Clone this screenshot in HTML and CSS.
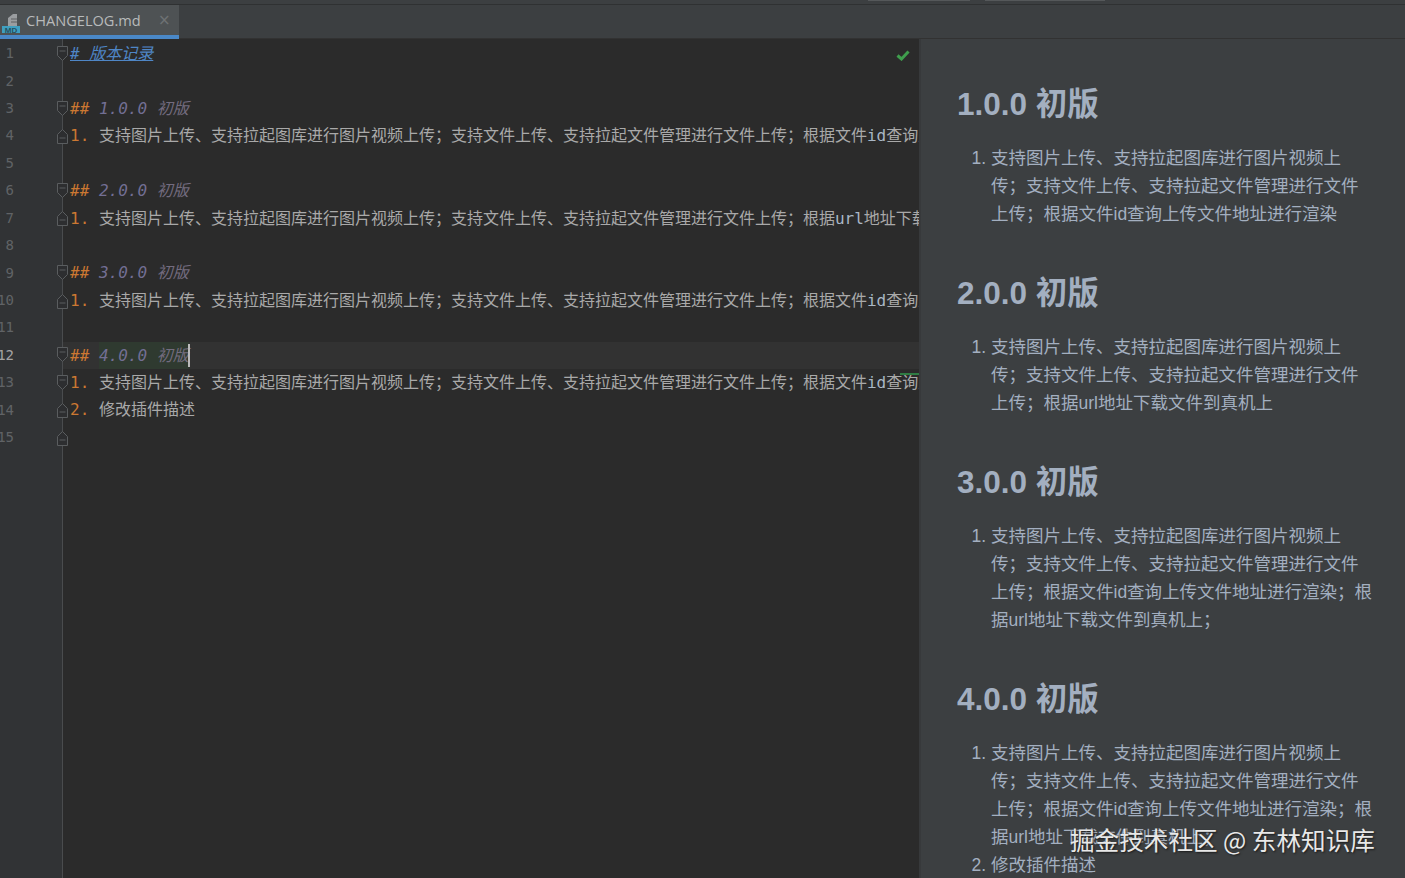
FILE: index.html
```html
<!DOCTYPE html>
<html lang="zh">
<head>
<meta charset="utf-8">
<title>CHANGELOG.md</title>
<link rel="stylesheet" href="styles.css">
</head>
<body>
<div class="app">
  <div class="topline"><span class="top-tick tick-a"></span><span class="top-tick tick-b"></span></div>
  <div class="tabbar">
    <div class="tab">
      <svg class="file-icon" width="18" height="20" viewBox="0 0 18 20"><path d="M6 5 L11 1 H15 V13 H6 Z" fill="#9a9da0"/><path d="M9 6 H15 M9 9 H15" stroke="#5c5f61" stroke-width="1"/><rect x="0" y="13" width="20" height="8" fill="#3f9fc0"/></svg>
      <span class="md-badge">MD</span>
      <span class="tab-name">CHANGELOG.md</span>
      <span class="tab-close">×</span>
    </div>
  </div>
  <div class="main">
    <div class="editor">
      <div class="gutter">
        <div class="gut-row"><span class="num">1</span><svg class="fold" width="11" height="16" viewBox="0 0 11 16"><path d="M.5.5h10v9l-5 5-5-5z M2.5 5h6" class="fold-path"/></svg></div>
        <div class="gut-row"><span class="num">2</span></div>
        <div class="gut-row"><span class="num">3</span><svg class="fold" width="11" height="16" viewBox="0 0 11 16"><path d="M.5.5h10v9l-5 5-5-5z M2.5 5h6" class="fold-path"/></svg></div>
        <div class="gut-row"><span class="num">4</span><svg class="fold" width="11" height="16" viewBox="0 0 11 16"><path d="M.5 15.5h10v-9l-5-5-5 5z M2.5 10h6" class="fold-path"/></svg></div>
        <div class="gut-row"><span class="num">5</span></div>
        <div class="gut-row"><span class="num">6</span><svg class="fold" width="11" height="16" viewBox="0 0 11 16"><path d="M.5.5h10v9l-5 5-5-5z M2.5 5h6" class="fold-path"/></svg></div>
        <div class="gut-row"><span class="num">7</span><svg class="fold" width="11" height="16" viewBox="0 0 11 16"><path d="M.5 15.5h10v-9l-5-5-5 5z M2.5 10h6" class="fold-path"/></svg></div>
        <div class="gut-row"><span class="num">8</span></div>
        <div class="gut-row"><span class="num">9</span><svg class="fold" width="11" height="16" viewBox="0 0 11 16"><path d="M.5.5h10v9l-5 5-5-5z M2.5 5h6" class="fold-path"/></svg></div>
        <div class="gut-row"><span class="num">10</span><svg class="fold" width="11" height="16" viewBox="0 0 11 16"><path d="M.5 15.5h10v-9l-5-5-5 5z M2.5 10h6" class="fold-path"/></svg></div>
        <div class="gut-row"><span class="num">11</span></div>
        <div class="gut-row"><span class="num current">12</span><svg class="fold" width="11" height="16" viewBox="0 0 11 16"><path d="M.5.5h10v9l-5 5-5-5z M2.5 5h6" class="fold-path"/></svg></div>
        <div class="gut-row"><span class="num">13</span><svg class="fold" width="11" height="16" viewBox="0 0 11 16"><path d="M.5.5h10v9l-5 5-5-5z M2.5 5h6" class="fold-path"/></svg></div>
        <div class="gut-row"><span class="num">14</span><svg class="fold" width="11" height="16" viewBox="0 0 11 16"><path d="M.5 15.5h10v-9l-5-5-5 5z M2.5 10h6" class="fold-path"/></svg></div>
        <div class="gut-row"><span class="num">15</span><svg class="fold" width="11" height="16" viewBox="0 0 11 16"><path d="M.5 15.5h10v-9l-5-5-5 5z M2.5 10h6" class="fold-path"/></svg></div>
      </div>
      <div class="code">
        <div class="line"><span class="h1-text"># 版本记录</span></div>
        <div class="line"></div>
        <div class="line"><span class="hash">##</span> <span class="ver">1.0.0</span> <span class="title">初版</span></div>
        <div class="line"><span class="marker">1.</span> 支持图片上传、支持拉起图库进行图片视频上传；支持文件上传、支持拉起文件管理进行文件上传；根据文件<span class="latin">id</span>查询上传文件地址进行渲染</div>
        <div class="line"></div>
        <div class="line"><span class="hash">##</span> <span class="ver">2.0.0</span> <span class="title">初版</span></div>
        <div class="line"><span class="marker">1.</span> 支持图片上传、支持拉起图库进行图片视频上传；支持文件上传、支持拉起文件管理进行文件上传；根据<span class="latin">url</span>地址下载文件到真机上</div>
        <div class="line"></div>
        <div class="line"><span class="hash">##</span> <span class="ver">3.0.0</span> <span class="title">初版</span></div>
        <div class="line"><span class="marker">1.</span> 支持图片上传、支持拉起图库进行图片视频上传；支持文件上传、支持拉起文件管理进行文件上传；根据文件<span class="latin">id</span>查询上传文件地址进行渲染；根据<span class="latin">url</span>地址下载文件到真机上；</div>
        <div class="line"></div>
        <div class="line current-line"><span class="hash">##</span> <span class="changed"><span class="ver">4.0.0</span> <span class="title">初版</span></span><span class="caret"></span></div>
        <div class="line"><span class="marker">1.</span> 支持图片上传、支持拉起图库进行图片视频上传；支持文件上传、支持拉起文件管理进行文件上传；根据文件<span class="latin">id</span>查询上传文件地址进行渲染；根据<span class="latin">url</span>地址下载文件到真机上；</div>
        <div class="line"><span class="marker">2.</span> 修改插件描述</div>
        <div class="line"></div>
      </div>
      <svg class="check" width="14" height="12" viewBox="0 0 14 12"><path d="M1.5 6.5 L5.5 10 L12.5 2.5" fill="none" stroke="#3f9e4d" stroke-width="3"/></svg>
      <span class="change-mark"></span>
    </div>
    <div class="divider"></div>
    <div class="preview">
      <h2>1.0.0 初版</h2>
      <ol><li>支持图片上传、支持拉起图库进行图片视频上传；支持文件上传、支持拉起文件管理进行文件上传；根据文件id查询上传文件地址进行渲染</li></ol>
      <h2>2.0.0 初版</h2>
      <ol><li>支持图片上传、支持拉起图库进行图片视频上传；支持文件上传、支持拉起文件管理进行文件上传；根据url地址下载文件到真机上</li></ol>
      <h2>3.0.0 初版</h2>
      <ol><li>支持图片上传、支持拉起图库进行图片视频上传；支持文件上传、支持拉起文件管理进行文件上传；根据文件id查询上传文件地址进行渲染；根据url地址下载文件到真机上；</li></ol>
      <h2>4.0.0 初版</h2>
      <ol><li>支持图片上传、支持拉起图库进行图片视频上传；支持文件上传、支持拉起文件管理进行文件上传；根据文件id查询上传文件地址进行渲染；根据url地址下载文件到真机上；</li><li>修改插件描述</li></ol>
    </div>
  </div>
  <div class="watermark">掘金技术社区 @ 东林知识库</div>
</div>
</body>
</html>
```
FILE: styles.css
```css
html, body { margin: 0; padding: 0; height: 100%; overflow: hidden; background: #2b2b2b; }
.app { position: relative; width: 1405px; height: 878px; overflow: hidden; display: flex; flex-direction: column; }
.topline { height: 4px; background: #3c3f41; border-bottom: 1px solid #2f3132; flex: none; position: relative; }
.top-tick { position: absolute; top: 0; height: 1px; background: #55585a; }
.tick-a { left: 868px; width: 102px; }
.tick-b { left: 985px; width: 120px; }
.tabbar { height: 33px; flex: none; background: #3c3f41; border-bottom: 1px solid #323232; }
.tab { position: relative; width: 179px; height: 30px; background: #4e5254; border-bottom: 4px solid #4a88c7; box-sizing: content-box; display: flex; align-items: center; margin-bottom: -1px; }
.file-icon { position: absolute; left: 2px; top: 8px; }
.md-badge { position: absolute; left: 2px; top: 22px; width: 18px; text-align: center; font: 700 8px/7px "Liberation Sans", sans-serif; color: #274f5e; }
.tab-name { margin-left: 26px; font: 14.6px/30px "Open Sans", sans-serif; color: #b8babb; white-space: nowrap; }
.tab-close { position: absolute; left: 158px; top: 0; font: 15px/30px "DejaVu Sans", sans-serif; color: #6f7274; }
.main { flex: 1; display: flex; min-height: 0; }
.editor { position: relative; width: 919px; flex: none; background: #2b2b2b; display: flex; overflow: hidden; padding-top: 1px; box-sizing: border-box; }
.gutter { width: 62px; flex: none; background: #313335; border-right: 1px solid #4a4c4e; margin-top: -1px; padding-top: 1px; }
.gut-row { height: 27.43px; display: flex; align-items: center; justify-content: space-between; }
.num { width: 14px; display: flex; justify-content: flex-end; overflow: hidden; font: 14px/27px "DejaVu Sans Mono", monospace; color: #606366; }
.num.current { color: #a4a3a3; }
.fold { margin-right: -6px; position: relative; }
.fold-path { fill: #2d2e30; stroke: #5a5d5f; stroke-width: 1; }
.code { flex: 1; min-width: 0; font: 16px/27.43px "DejaVu Sans Mono", "Noto Sans CJK SC", monospace; color: #a9a9a9; }
.line { height: 27.43px; padding-left: 7px; white-space: pre; overflow: hidden; }
.current-line { background: #323232; }
.h1-text { color: #4f86c6; font-style: italic; text-decoration: underline; }
.hash { color: #cc7832; font-style: italic; }
.ver { color: #736f94; font-style: italic; }
.title { color: #736c7f; font-style: italic; }
.marker { color: #cc7832; }
.latin { color: #a9b7c6; }
.changed { display: inline-block; height: 27.43px; background: #2f3a30; }
.caret { display: inline-block; width: 2px; height: 23px; margin-left: -1px; background: #bbbbbb; vertical-align: top; margin-top: 2px; }
.check { position: absolute; left: 896px; top: 10px; }
.change-mark { position: absolute; left: 900px; top: 334px; width: 19px; height: 2px; background: #2f7d43; }
.divider { width: 2px; flex: none; background: #37393b; }
.preview { flex: 1; min-width: 0; background: #3c3f41; padding: 0 30px 0 36px; overflow: hidden; font: 17.5px/28px "Liberation Sans", "Noto Sans CJK SC", sans-serif; color: #a3afc0; }
.preview h2 { margin: 47px 0 0; font: 700 31.5px/36px "Liberation Sans", "Noto Sans CJK SC", sans-serif; color: #a3afc0; }
.preview h2 + ol { margin: 22px 0 0; }
.preview h2:first-child { margin-top: 47px; }
.preview ol { padding-left: 34px; margin: 0; }
.watermark { position: absolute; left: 1070px; top: 822px; font: 24.6px/34px "Noto Sans CJK SC", sans-serif; color: #e8e8e8; text-shadow: 1px 1px 2px #1a1a1a; white-space: nowrap; }
```
